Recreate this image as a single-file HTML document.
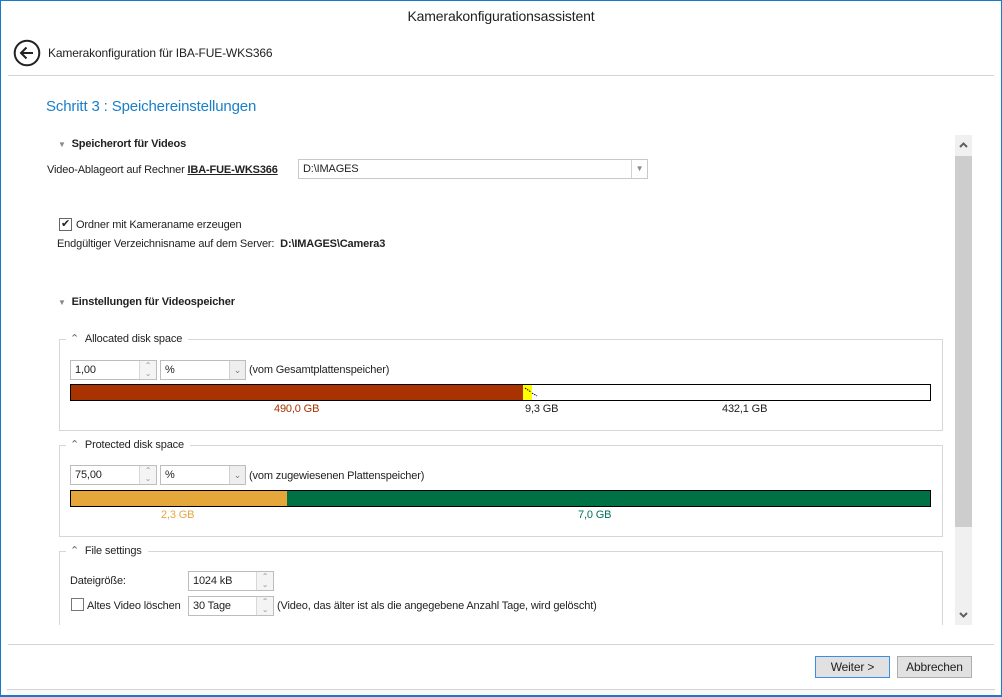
<!DOCTYPE html>
<html><head><meta charset="utf-8"><style>
*{margin:0;padding:0;box-sizing:border-box}
body{width:1002px;height:697px;background:#fff;font-family:"Liberation Sans",sans-serif;font-size:11px;color:#222;position:relative;overflow:hidden;letter-spacing:-0.15px}
.a{position:absolute;white-space:nowrap}
.t{line-height:14px}
.grp{position:absolute;border:1px solid #d6d6d6}
.gh{position:absolute;background:#fff;padding:0 6px 0 4px;top:-8px;left:6px;line-height:14px}
.inp{position:absolute;border:1px solid #bdbdbd;background:#fff;height:20px;line-height:18px;padding-left:4px}
.spin{position:absolute;right:0;top:0;width:17px;height:18px;border-left:1px solid #d8d8d8;background:#f4f4f4;color:#999;font-size:8px;line-height:8px;text-align:center;padding-top:1px}
.dd{position:absolute;right:0;top:0;width:16px;height:18px;border-left:1px solid #d0d0d0;background:#eee;color:#777;font-size:9px;text-align:center;line-height:18px}
.bar{position:absolute;border:1px solid #000;height:17px;overflow:hidden}
.btn{position:absolute;height:22px;border:1px solid #adadad;background:#e1e1e1;text-align:center;line-height:20px;font-size:12px}
.hl{position:absolute;height:1px;background:#d4d4d4}
.cb{position:absolute;width:13px;height:13px;border:1px solid #666;background:#fff}
</style></head><body>
<div class="a" style="left:0;top:0;width:1002px;height:697px;border:1px solid #1979ca;border-bottom-width:2px"></div>
<div class="a" style="left:0;top:7px;width:1002px;text-align:center;font-size:14px;line-height:18px">Kamerakonfigurationsassistent</div>
<svg class="a" style="left:13px;top:39px" width="28" height="28" viewBox="0 0 28 28"><circle cx="14" cy="14" r="12.3" fill="none" stroke="#222" stroke-width="2"/><path d="M8 14H20M13.5 8.5L8 14l5.5 5.5" fill="none" stroke="#222" stroke-width="2"/></svg>
<div class="a t" style="left:48px;top:46px;font-size:12px">Kamerakonfiguration für IBA-FUE-WKS366</div>
<div class="hl" style="left:8px;top:75px;width:986px"></div>
<div class="a" style="left:46px;top:98px;font-size:15px;color:#1a7ec9;line-height:18px">Schritt 3 : Speichereinstellungen</div>
<div class="a" style="left:955px;top:135px;width:17px;height:490px;background:#f0f0f0"></div>
<div class="a" style="left:955px;top:156px;width:17px;height:371px;background:#cdcdcd"></div>
<svg class="a" style="left:955px;top:139px" width="17" height="12"><path d="M5 8L8.5 4.5L12 8" fill="none" stroke="#606060" stroke-width="2"/></svg>
<svg class="a" style="left:955px;top:609px" width="17" height="12"><path d="M5 4L8.5 7.5L12 4" fill="none" stroke="#606060" stroke-width="2"/></svg>
<div class="a" style="left:0;top:0;width:955px;height:625px;overflow:hidden">
<div class="a t" style="left:58px;top:137px;font-weight:bold"><span style="color:#888;font-size:8px">&#9660;</span>&nbsp;&nbsp;Speicherort für Videos</div>
<div class="a t" style="left:47px;top:163px">Video-Ablageort auf Rechner <b style="text-decoration:underline">IBA-FUE-WKS366</b></div>
<div class="inp" style="left:298px;top:159px;width:350px;border-color:#c9c9c9">D:\IMAGES<div class="dd" style="background:#fff;color:#888;font-size:8px">&#9660;</div></div>
<div class="cb" style="left:59px;top:218px;font-size:11px;line-height:11px;text-align:center">&#10004;</div>
<div class="a t" style="left:76px;top:218px">Ordner mit Kameraname erzeugen</div>
<div class="a t" style="left:57px;top:237px">Endgültiger Verzeichnisname auf dem Server:&nbsp; <b>D:\IMAGES\Camera3</b></div>
<div class="a t" style="left:58px;top:295px;font-weight:bold"><span style="color:#888;font-size:8px">&#9660;</span>&nbsp;&nbsp;Einstellungen für Videospeicher</div>

<div class="grp" style="left:59px;top:339px;width:884px;height:92px"><div class="gh"><span style="color:#666">&#8963;</span>&nbsp;&nbsp;Allocated disk space</div></div>
<div class="inp" style="left:70px;top:360px;width:87px">1,00<div class="spin">&#8963;<br>&#8964;</div></div>
<div class="inp" style="left:160px;top:360px;width:86px">%<div class="dd">&#8964;</div></div>
<div class="a t" style="left:249px;top:363px">(vom Gesamtplattenspeicher)</div>
<div class="bar" style="left:70px;top:384px;width:861px;background:#fff"><div class="a" style="left:0;top:0;width:452px;height:15px;background:#a83200"></div><div class="a" style="left:452px;top:0;width:9px;height:15px;background:#ffff00"></div><svg class="a" style="left:453px;top:0" width="20" height="12"><path d="M1 3L7 7M8 8L13 11" stroke="#000" stroke-width="1" stroke-dasharray="1.5 1"/></svg></div>
<div class="a t" style="left:274px;top:402px;color:#a83200">490,0 GB</div>
<div class="a t" style="left:525px;top:402px">9,3 GB</div>
<div class="a t" style="left:722px;top:402px">432,1 GB</div>

<div class="grp" style="left:59px;top:445px;width:884px;height:92px"><div class="gh"><span style="color:#666">&#8963;</span>&nbsp;&nbsp;Protected disk space</div></div>
<div class="inp" style="left:70px;top:465px;width:87px">75,00<div class="spin">&#8963;<br>&#8964;</div></div>
<div class="inp" style="left:160px;top:465px;width:86px">%<div class="dd">&#8964;</div></div>
<div class="a t" style="left:249px;top:469px">(vom zugewiesenen Plattenspeicher)</div>
<div class="bar" style="left:70px;top:490px;width:861px;background:#007045"><div class="a" style="left:0;top:0;width:216px;height:15px;background:#e6a73a"></div></div>
<div class="a t" style="left:161px;top:508px;color:#e6a73a">2,3 GB</div>
<div class="a t" style="left:578px;top:508px;color:#007060">7,0 GB</div>

<div class="grp" style="left:59px;top:551px;width:884px;height:120px"><div class="gh"><span style="color:#666">&#8963;</span>&nbsp;&nbsp;File settings</div></div>
<div class="a t" style="left:70px;top:574px">Dateigröße:</div>
<div class="inp" style="left:188px;top:571px;width:86px">1024 kB<div class="spin">&#8963;<br>&#8964;</div></div>
<div class="cb" style="left:71px;top:598px;border-color:#777"></div>
<div class="a t" style="left:87px;top:599px">Altes Video löschen</div>
<div class="inp" style="left:188px;top:596px;width:86px">30 Tage<div class="spin">&#8963;<br>&#8964;</div></div>
<div class="a t" style="left:277px;top:599px">(Video, das älter ist als die angegebene Anzahl Tage, wird gelöscht)</div>
</div>
<div class="hl" style="left:8px;top:644px;width:986px"></div>
<div class="btn" style="left:815px;top:656px;width:75px;border-color:#3c8ee5">Weiter &gt;</div>
<div class="btn" style="left:897px;top:656px;width:75px">Abbrechen</div>
<div class="a" style="left:7px;top:689px;width:988px;height:6px;background:#f7f7f7;border-top:1px solid #d4d4d4"></div>
</body></html>
